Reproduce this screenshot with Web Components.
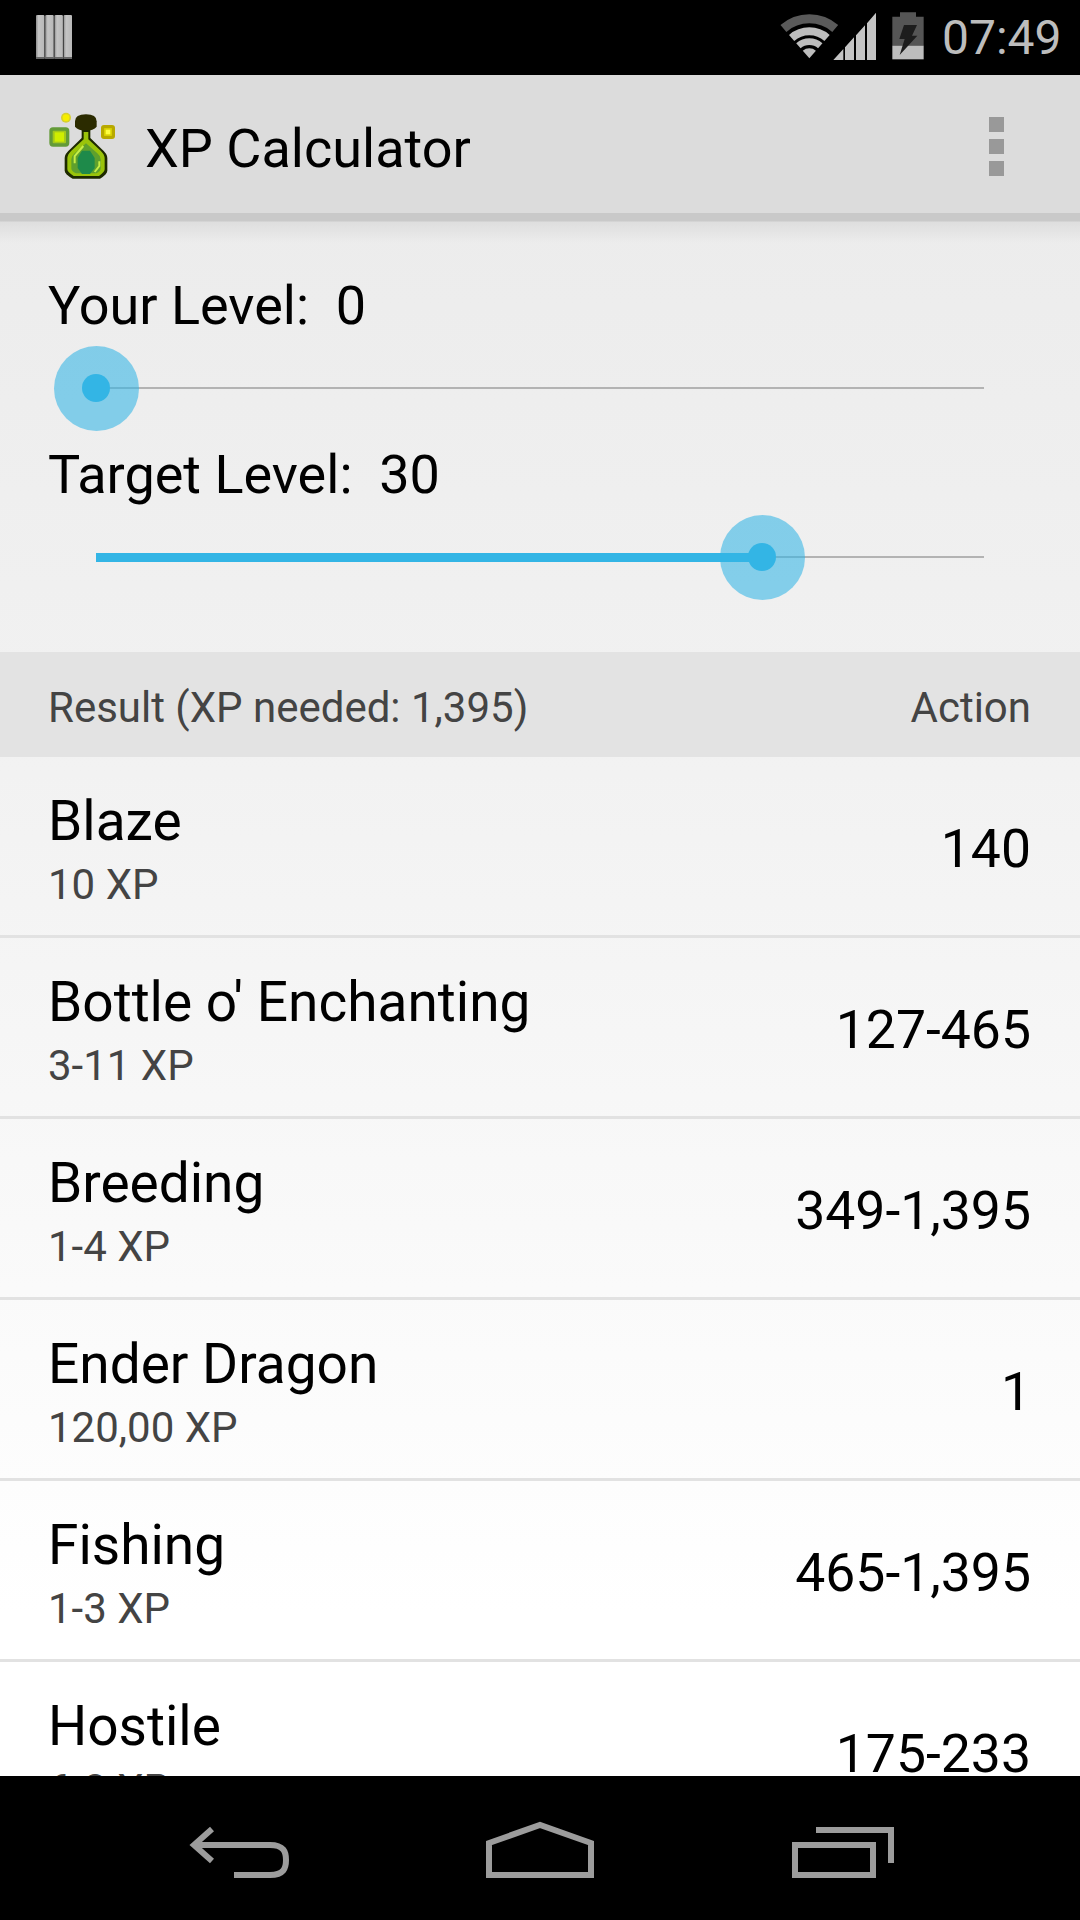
<!DOCTYPE html>
<html lang="en"><head><meta charset="utf-8"><title>XP Calculator</title>
<style>
html,body{margin:0;padding:0;background:#000}
body{width:1080px;height:1920px;overflow:hidden;font-family:Roboto,"Liberation Sans",sans-serif}
</style></head>
<body>
<xp-screen>
  <status-bar slot="status">07:49</status-bar>
  <app-bar slot="bar">XP Calculator</app-bar>
  <level-slider label="Your Level:" value="0" pos="0"></level-slider>
  <level-slider label="Target Level:" value="30" pos="0.75" active></level-slider>
  <result-header><span>Result (XP needed: 1,395)</span><span slot="action">Action</span></result-header>
  <result-row><span slot="name">Blaze</span><span slot="xp">10 XP</span><span slot="amount">140</span></result-row>
  <result-row><span slot="name">Bottle o' Enchanting</span><span slot="xp">3-11 XP</span><span slot="amount">127-465</span></result-row>
  <result-row><span slot="name">Breeding</span><span slot="xp">1-4 XP</span><span slot="amount">349-1,395</span></result-row>
  <result-row><span slot="name">Ender Dragon</span><span slot="xp">120,00 XP</span><span slot="amount">1</span></result-row>
  <result-row><span slot="name">Fishing</span><span slot="xp">1-3 XP</span><span slot="amount">465-1,395</span></result-row>
  <result-row><span slot="name">Hostile</span><span slot="xp">6-8 XP</span><span slot="amount">175-233</span></result-row>
  <nav-bar slot="nav"></nav-bar>
</xp-screen>
<script>
function def(name, html, init){
  const t=document.createElement('template');t.innerHTML=html;
  customElements.define(name,class extends HTMLElement{
    constructor(){super();this.attachShadow({mode:'open'}).appendChild(t.content.cloneNode(true));}
    connectedCallback(){if(init)init(this,this.shadowRoot);}
  });
}
def('xp-screen',`<style>
:host{display:flex;flex-direction:column;width:1080px;height:1920px;overflow:hidden;background:#000}
.content{flex:1;min-height:0;overflow:hidden;display:flex;flex-direction:column;background:linear-gradient(#ececec 0,#f2f2f2 560px,#fff 1400px);position:relative}
.content::before{content:"";position:absolute;left:0;right:0;top:0;height:30px;background:linear-gradient(#c9c9c9 0,#c9c9c9 8px,#dedede 9px,rgba(236,236,236,0) 100%)}
.sliders{height:439px;flex:none;box-sizing:border-box;padding-top:50px;position:relative}
</style>
<slot name="status"></slot><slot name="bar"></slot>
<div class="content"><div class="sliders"><slot></slot></div><slot name="list"></slot></div>
<slot name="nav"></slot>`,(el,root)=>{
  el.querySelectorAll('result-header,result-row').forEach(n=>n.slot='list');
});
def('status-bar',`<style>
:host{display:flex;flex:none;height:75px;background:#000;color:#bdbdbd;align-items:flex-start;box-sizing:border-box;position:relative;font:48px/75px Roboto,sans-serif}
.l{margin:15px 0 0 36px;width:36px;height:45px;display:block}
.s{flex:1}
.r{display:block;margin:0;width:200px;height:75px}
.t{width:118px;margin:0 20px 0 2px;white-space:nowrap}
</style>
<svg class="l" viewBox="0 0 34 45" preserveAspectRatio="none"><defs><linearGradient id="b" x1="0" x2="1"><stop offset="0" stop-color="#8f8f8f"/><stop offset=".3" stop-color="#c4c4c4"/><stop offset="1" stop-color="#b8b8b8"/></linearGradient></defs>
<g fill="url(#b)"><rect x="0" width="8" height="44" rx="1"/><rect x="8.700" width="8" height="44" rx="1"/><rect x="17.400" width="8" height="44" rx="1"/><rect x="26" width="8" height="44" rx="1"/></g>
<path d="M0 44h8v-2H0zM8.700 44h8v-2h-8zM17.400 44h8v-2h-8zM26 44h8v-2h-8z" fill="#666"/></svg>
<div class="s"></div>
<svg class="r" viewBox="0 0 600 225" preserveAspectRatio="none">
<g fill="none">
<path d="M130.300 85.500A118.500 118.500 0 0 1 285.700 85.500" stroke="#5a5a5a" stroke-width="27"/>
<path d="M154.900 113.800A81 81 0 0 1 261.100 113.800" stroke="#bdbdbd" stroke-width="24"/>
<path d="M175.200 137.200A50 50 0 0 1 240.800 137.200" stroke="#bdbdbd" stroke-width="20"/>
</g>
<path d="M208 175L188.300 152.300A30 30 0 0 1 227.700 152.300Z" fill="#bdbdbd"/>
<path d="M280 180L310 147V180ZM315 180V142L342 112V180ZM348 180V106L375 76V180ZM381 180V70L408 38V180Z" fill="#c4c4c4"/>
<path d="M480 37h48v13h23v87H457V50h23Z" fill="#555"/>
<rect x="457" y="137" width="94" height="41" fill="#bdbdbd"/>
<path d="M492 75h39l-15 32h16l-53 58 15-48h-16Z" fill="#1d1d1d"/>
</svg>
<span class="t"><slot></slot></span>`);
def('app-bar',`<style>
:host{display:flex;flex:none;height:138px;background:#dcdcdc;align-items:center;position:relative;color:#000;font:54px Roboto,sans-serif}
svg.i{width:100px;height:100px;margin:25px 16px 0 30px;flex:none;align-self:flex-start}
.n{flex:1;white-space:nowrap;padding-top:9px;margin-left:-1px}
.m{display:flex;flex-direction:column;gap:7px;margin:4px 76px 0 0}
.m i{display:block;width:15px;height:15px;background:#999}
</style>
<svg class="i" viewBox="0 0 300 300">
<circle cx="108" cy="53" r="15" fill="#d6cf30"/><circle cx="108" cy="53" r="10" fill="#f6ee00"/>
<rect x="58" y="82" width="60" height="58" rx="11" fill="#639b38"/><rect x="68" y="92" width="40" height="38" rx="3" fill="#a4c81c"/><rect x="74" y="97" width="28" height="28" fill="#cfee00"/>
<rect x="213" y="75" width="42" height="42" rx="9" fill="#b8a900"/><rect x="222" y="84" width="24" height="24" rx="2" fill="#d8d000"/><rect x="227" y="89" width="14" height="14" fill="#ffff40"/>
<path d="M135 80V64Q135 43 168 43Q200 43 200 64V80Q190 92 168 92Q145 92 135 80Z" fill="#2b2b00"/>
<path d="M155 90h26v24l33 32q18 15 18 28v38q0 10-22 24H128q-24-14-24-24v-38q0-13 18-28l33-32Z" fill="#1e2a00"/>
<path d="M161 96h14v22l37 34q12 11 12 24v32q0 8-17 20H131q-19-12-19-20v-32q0-13 12-24l37-34Z" fill="#9ac40a"/>
<path d="M168 130l34 30q10 8 10 18v28q0 6-13 14H138q-14-8-14-14v-28q0-10 10-18Z" fill="#5fa02d"/>
<path d="M156 152h24l14 22v30l-14 18h-24l-13-18v-30Z" fill="#1e8a4a"/>
<path d="M160 138l-26 30v22M208 184v14l-14 18" fill="none" stroke="#c6ee45" stroke-width="6"/>
</svg>
<span class="n"><slot></slot></span>
<div class="m"><i></i><i></i><i></i></div>`);
def('level-slider',`<style>
:host{display:block;height:169px;color:#000;font:54px Roboto,sans-serif}
.lab{height:75px;line-height:85px;padding-left:48px;white-space:pre}
.track{position:relative;height:94px;margin:0 96px}
.line{position:absolute;left:0;right:0;top:49px;height:2px;background:#b3b3b3}
.fill{position:absolute;left:0;top:46px;height:9px;background:#33b5e5}
.glow{position:absolute;top:8px;width:85px;height:85px;margin-left:-42.500px;border-radius:50%;background:rgba(51,181,229,.58)}
.dot{position:absolute;top:36px;width:28px;height:28px;margin-left:-14px;border-radius:50%;background:#33b5e5}
</style>
<div class="lab"></div>
<div class="track"><div class="line"></div><div class="fill"></div><div class="glow"></div><div class="dot"></div></div>`,(el,r)=>{
  r.querySelector('.lab').textContent=el.getAttribute('label')+'  '+el.getAttribute('value');
  const p=parseFloat(el.getAttribute('pos'))*100+'%';
  r.querySelector('.glow').style.left=p;r.querySelector('.dot').style.left=p;
  r.querySelector('.fill').style.width=el.hasAttribute('active')?p:'0';
});
def('result-header',`<style>
:host{display:flex;flex:none;height:105px;box-sizing:border-box;padding:5px 49px 0 48px;align-items:center;justify-content:space-between;background:#e3e3e3;color:#444;font:42px Roboto,sans-serif;white-space:nowrap}
</style><slot></slot><slot name="action"></slot>`);
def('result-row',`<style>
:host{display:flex;flex:none;height:181px;box-sizing:border-box;border-bottom:3px solid #e2e2e2;align-items:center;justify-content:space-between;padding:0 49px 0 48px;white-space:nowrap;color:#000}
.c{display:flex;flex-direction:column;padding-top:1px}
.n{font:55px/76px Roboto,sans-serif}
.x{font:42px/51px Roboto,sans-serif;color:#444}
.a{font:53.500px Roboto,sans-serif;padding-top:5px}
</style><div class="c"><span class="n"><slot name="name"></slot></span><span class="x"><slot name="xp"></slot></span></div><span class="a"><slot name="amount"></slot></span>`);
def('nav-bar',`<style>
:host{display:grid;grid-template-columns:repeat(3,300px);flex:none;height:144px;padding:0 90px;background:#000;justify-items:center;position:relative;z-index:1}
svg{display:block;width:300px;height:144px}
</style>
<svg viewBox="90 1776 300 144"><path d="M212 1829L194 1845L212 1861M194 1845H270C284 1845 286 1852 286 1860C286 1868 284 1875 270 1875H234" fill="none" stroke="#9c9c9c" stroke-width="6"/></svg>
<svg viewBox="390 1776 300 144"><path d="M489 1875V1843L540 1825L591 1843V1875Z" fill="none" stroke="#9c9c9c" stroke-width="6"/></svg>
<svg viewBox="690 1776 300 144"><path d="M795 1845H873V1875H795Z" fill="none" stroke="#9c9c9c" stroke-width="6"/><path d="M816 1830H891V1863" fill="none" stroke="#9c9c9c" stroke-width="6"/></svg>`);
</script>
</body></html>
